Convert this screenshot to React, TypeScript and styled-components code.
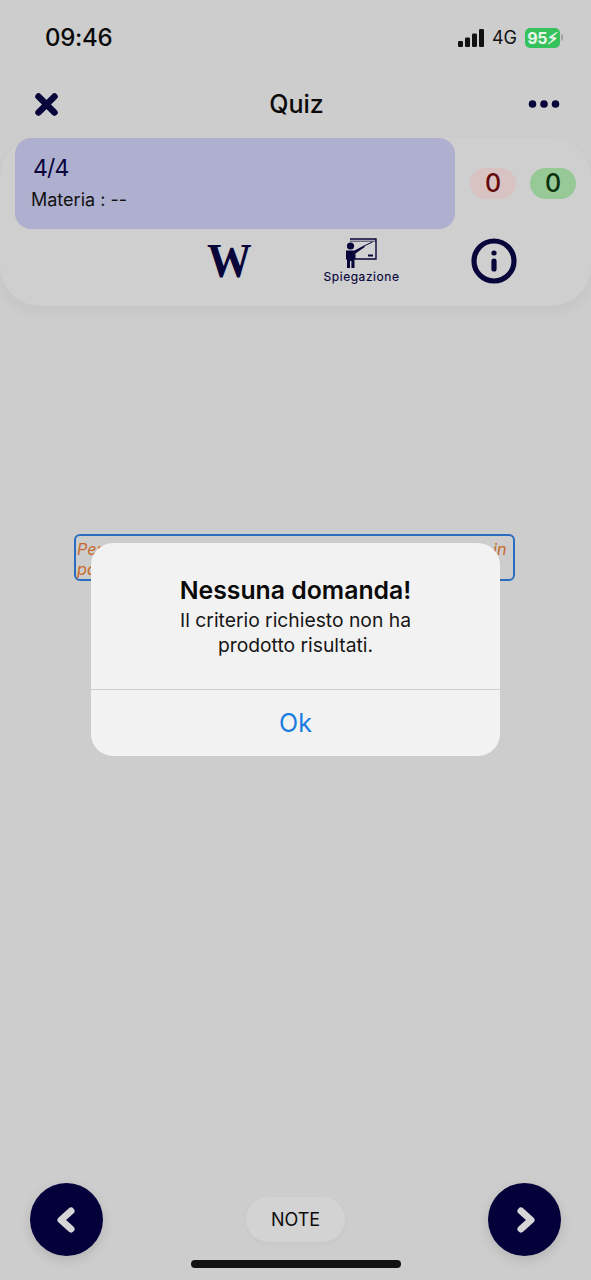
import React from "react";
import styled, { createGlobalStyle } from "styled-components";
import { Info } from "lucide-react";

const Global = createGlobalStyle`
  html, body {
    margin: 0;
    padding: 0;
    background: #cdcdcd;
  }
  * {
    box-sizing: border-box;
  }
`;

const Screen = styled.div`
  position: relative;
  width: 591px;
  height: 1280px;
  overflow: hidden;
  display: flex;
  flex-direction: column;
  background: #cdcdcd;
  font-family: Inter, "Liberation Sans", sans-serif;
  color: #0a0a0a;
`;

const StatusBar = styled.div`
  height: 75px;
  flex: none;
  display: flex;
  align-items: center;
  justify-content: space-between;
  padding: 0 28px 0 45px;
`;
const Clock = styled.span`
  font-size: 24px;
  font-weight: 500;
  letter-spacing: -0.3px;
`;
const StatusRight = styled.div`
  display: flex;
  align-items: center;
`;
const Network = styled.span`
  font-size: 18px;
  margin: 0 8px 0 8px;
  color: #111;
`;
const Battery = styled.span`
  width: 35px;
  height: 20px;
  border-radius: 5px;
  background: #35c25c;
  color: #e8f5ea;
  font-size: 16px;
  font-weight: 700;
  display: flex;
  align-items: center;
  justify-content: center;
  letter-spacing: -0.3px;
`;
const BatteryCap = styled.span`
  width: 2px;
  height: 7px;
  margin-left: 1px;
  border-radius: 0 2px 2px 0;
  background: #a2a2a2;
`;

const NavBar = styled.div`
  height: 58px;
  flex: none;
  margin-top: 0;
  padding: 0 31px 0 34px;
  display: flex;
  align-items: center;
  justify-content: space-between;
  position: relative;
`;
const NavTitle = styled.span`
  flex: 1;
  padding-left: 6px;
  text-align: center;
  font-size: 25px;
  font-weight: 500;
`;

const Card = styled.div`
  flex: none;
  height: 168px;
  margin-top: 5px;
  padding: 0 15px;
  border-radius: 40px;
  background: #cfcfcf;
  box-shadow: 0 6px 14px rgba(0, 0, 0, 0.045);
`;
const CardTop = styled.div`
  display: flex;
  align-items: center;
`;
const InfoPanel = styled.div`
  width: 440px;
  height: 91px;
  border-radius: 16px;
  background: #afafcf;
  padding: 16px 16px 0;
`;
const Progress = styled.div`
  font-size: 23px;
  color: #07053a;
  margin-left: 2px;
  line-height: 28px;
  letter-spacing: -0.8px;
`;
const Subject = styled.div`
  font-size: 18px;
  margin-top: 6px;
  line-height: 24px;
  color: #111;
`;
const Counters = styled.div`
  display: flex;
  gap: 14px;
  margin: 0 0 0 15px;
`;
const Counter = styled.div<{ $bg: string; $fg: string }>`
  width: 46px;
  height: 31px;
  border-radius: 16px;
  background: ${(p) => p.$bg};
  color: ${(p) => p.$fg};
  font-size: 25px;
  font-weight: 500;
  line-height: 31px;
  text-align: center;
`;
const Tools = styled.div`
  display: flex;
  align-items: flex-start;
  padding: 9px 0 0 192px;
`;
const WikiMark = styled.span`
  width: 44px;
  margin-top: 3px;
  font-family: "Liberation Serif", serif;
  font-weight: 700;
  font-size: 48px;
  line-height: 40px;
  color: #07053a;
  transform: scaleX(0.93);
  transform-origin: left center;
`;
const Explain = styled.div`
  width: 75px;
  margin-left: 73px;
  display: flex;
  flex-direction: column;
  align-items: center;
  color: #07053a;
`;
const ExplainLabel = styled.span`
  font-size: 12px;
  line-height: 14px;
  margin-top: 1px;
  letter-spacing: 0.55px;
  white-space: nowrap;
  -webkit-text-stroke: 0.15px #07053a;
`;
const InfoButton = styled.div`
  margin: -1px 0 0 71px;
  width: 48px;
  height: 48px;
  color: #07053a;
`;

const Main = styled.main`
  flex: 1;
  padding: 228px 76px 0 74px;
`;
const Hint = styled.div`
  width: 441px;
  height: 47px;
  border: 2px solid #2a6cc0;
  border-radius: 6px;
  padding: 3px 1px;
  font-size: 16.2px;
  line-height: 20px;
  font-style: italic;
  color: #c8692a;
  white-space: nowrap;
`;

const Footer = styled.footer`
  flex: none;
  display: flex;
  align-items: center;
  justify-content: space-between;
  padding: 0 30px;
  margin-bottom: 24px;
`;
const RoundButton = styled.div`
  width: 73px;
  height: 73px;
  border-radius: 50%;
  background: #03003a;
  display: flex;
  align-items: center;
  justify-content: center;
  box-shadow: 0 4px 12px rgba(0, 0, 0, 0.12);
`;
const NoteButton = styled.div`
  width: 99px;
  height: 45px;
  border-radius: 23px;
  background: #d3d3d3;
  font-size: 18px;
  line-height: 45px;
  text-align: center;
  color: #0c0c0c;
  box-shadow: 0 2px 6px rgba(0, 0, 0, 0.03);
`;
const HomeBar = styled.div`
  position: absolute;
  left: 191px;
  top: 1260px;
  width: 210px;
  height: 8px;
  border-radius: 4px;
  background: #111;
`;

const Overlay = styled.div`
  position: absolute;
  inset: 0;
  display: flex;
  justify-content: center;
  padding-top: 543px;
`;
const Alert = styled.div`
  width: 409px;
  height: 213px;
  border-radius: 22px;
  background: #f2f2f2;
  display: flex;
  flex-direction: column;
  text-align: center;
`;
const AlertBody = styled.div`
  flex: none;
  height: 147px;
  padding-top: 31px;
  border-bottom: 1px solid #cfcfcf;
`;
const AlertTitle = styled.div`
  font-size: 24.8px;
  line-height: 32px;
  font-weight: 600;
  color: #0a0a0a;
`;
const AlertText = styled.div`
  font-size: 19.3px;
  line-height: 25px;
  margin-top: 2px;
  color: #161616;
`;
const AlertAction = styled.div`
  flex: 1;
  font-size: 25px;
  line-height: 66px;
  color: #1a7ce0;
`;

function SignalBars() {
  return (
    <svg width="26" height="18" viewBox="0 0 26 18">
      <rect x="0" y="12" width="5" height="6" rx="1.2" fill="#111" />
      <rect x="7" y="8.5" width="5" height="9.5" rx="1.2" fill="#111" />
      <rect x="14" y="4.5" width="5" height="13.5" rx="1.2" fill="#111" />
      <rect x="21" y="0" width="5" height="18" rx="1.2" fill="#111" />
    </svg>
  );
}

function CloseIcon() {
  return (
    <svg width="25" height="25" viewBox="0 0 25 25">
      <path d="M4.5 4.5 L20.5 20.5 M20.5 4.5 L4.5 20.5" stroke="#07053a" strokeWidth="6.5" strokeLinecap="round" />
    </svg>
  );
}

function MoreIcon() {
  return (
    <svg width="32" height="10" viewBox="0 0 32 10">
      <circle cx="4.5" cy="5" r="3.8" fill="#07053a" />
      <circle cx="16" cy="5" r="3.8" fill="#07053a" />
      <circle cx="27.5" cy="5" r="3.8" fill="#07053a" />
    </svg>
  );
}

function TeacherIcon() {
  return (
    <svg width="31" height="31" viewBox="0 0 31 31">
      <path d="M4 1 H30 V21 H9" fill="#d2d2d2" stroke="#07053a" strokeWidth="1.4" />
      <path d="M4 3.2 H30" stroke="#07053a" strokeWidth="0.7" />
      <rect x="22" y="16.5" width="5" height="2" fill="#07053a" />
      <circle cx="4.5" cy="8" r="3.6" fill="#07053a" />
      <path d="M0 12.5 H8.5 L18 7.5 L18.8 9 L9.5 15.5 V21.5 H8.5 V30 H5.4 V23 H4 V30 H1 V21.5 H0 Z" fill="#07053a" />
      <path d="M18 8 L26.5 4" stroke="#07053a" strokeWidth="1" />
    </svg>
  );
}

function Chevron({ dir }: { dir: "left" | "right" }) {
  const d = dir === "left" ? "M17 5 L7 14 L17 23" : "M9 5 L19 14 L9 23";
  return (
    <svg width="26" height="28" viewBox="0 0 26 28" fill="none">
      <path d={d} stroke="#d6d6d6" strokeWidth="7" strokeLinecap="round" strokeLinejoin="round" />
    </svg>
  );
}

export default function App() {
  return (
    <Screen>
      <Global />
      <StatusBar>
        <Clock>09:46</Clock>
        <StatusRight>
          <SignalBars />
          <Network>4G</Network>
          <Battery>95⚡︎</Battery>
          <BatteryCap />
        </StatusRight>
      </StatusBar>
      <NavBar>
        <CloseIcon />
        <NavTitle>Quiz</NavTitle>
        <MoreIcon />
      </NavBar>
      <Card>
        <CardTop>
          <InfoPanel>
            <Progress>4/4</Progress>
            <Subject>Materia : --</Subject>
          </InfoPanel>
          <Counters>
            <Counter $bg="#d8c2c2" $fg="#650808">0</Counter>
            <Counter $bg="#96c996" $fg="#0a300a">0</Counter>
          </Counters>
        </CardTop>
        <Tools>
          <WikiMark>W</WikiMark>
          <Explain>
            <TeacherIcon />
            <ExplainLabel>Spiegazione</ExplainLabel>
          </Explain>
          <InfoButton>
            <Info size={48} strokeWidth={2.6} />
          </InfoButton>
        </Tools>
      </Card>
      <Main>
        <Hint>
          Per questa domanda i risultati sono stati riportati solo in
          <br />
          parte.
        </Hint>
      </Main>
      <Footer>
        <RoundButton>
          <Chevron dir="left" />
        </RoundButton>
        <NoteButton>NOTE</NoteButton>
        <RoundButton>
          <Chevron dir="right" />
        </RoundButton>
      </Footer>
      <HomeBar />
      <Overlay>
        <Alert>
          <AlertBody>
            <AlertTitle>Nessuna domanda!</AlertTitle>
            <AlertText>
              Il criterio richiesto non ha
              <br />
              prodotto risultati.
            </AlertText>
          </AlertBody>
          <AlertAction>Ok</AlertAction>
        </Alert>
      </Overlay>
    </Screen>
  );
}
